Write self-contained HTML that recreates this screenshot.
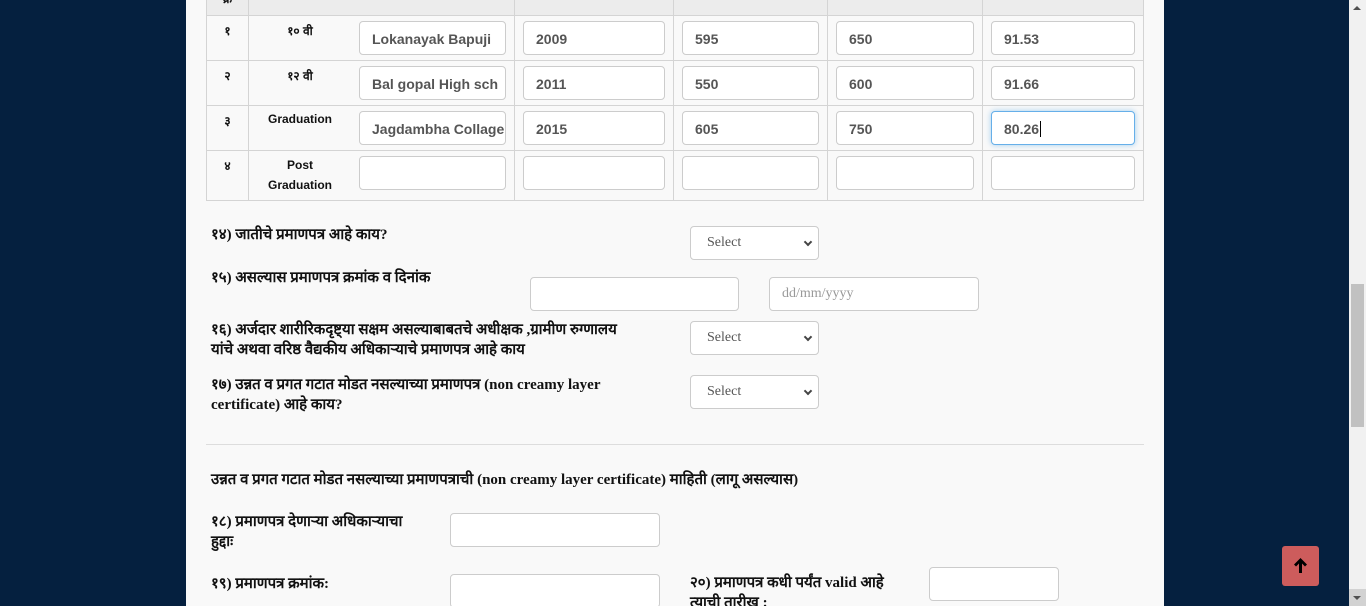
<!DOCTYPE html>
<html style="overflow:hidden;height:606px"><head><meta charset="utf-8"><style>
*{box-sizing:border-box;margin:0;padding:0}
body{width:1366px;height:606px;overflow:hidden;background:#05203f;position:relative;font-family:"Liberation Serif",serif;color:#111}
.panel{position:absolute;left:186px;top:0;width:978px;height:606px;background:#f9f9f9}
.a{position:absolute}
.hl{position:absolute;background:#d4d4d4;height:1px}
.vl{position:absolute;background:#d4d4d4;width:1px}
.inp{position:absolute;background:#fff;border:1px solid #ccc;border-radius:4px;height:34px;font-family:"Liberation Sans",sans-serif;font-weight:bold;font-size:14px;color:#555;padding:9px 12px;white-space:nowrap;overflow:hidden}
.sel{position:absolute;background:#fff;border:1px solid #ccc;border-radius:4px;height:34px;width:129px;font-size:14px;color:#555;padding:8px 16px}
.sel:after{content:"";position:absolute;right:7px;top:12px;width:4px;height:4px;border-right:2px solid #444;border-bottom:2px solid #444;transform:rotate(45deg)}
.c{font-family:"Liberation Sans",sans-serif;font-size:12px;text-align:center;color:#111;font-weight:bold}
.lb{position:absolute;font-size:15px;font-weight:bold;line-height:20px;color:#111}
</style></head><body>
<div class="panel"></div>
<div class="a" style="left:206px;top:0;width:938px;height:15px;background:#ececec"></div>
<div class="hl" style="left:206px;top:15px;width:938px"></div>
<div class="hl" style="left:206px;top:60px;width:938px"></div>
<div class="hl" style="left:206px;top:105px;width:938px"></div>
<div class="hl" style="left:206px;top:150px;width:938px"></div>
<div class="hl" style="left:206px;top:200px;width:938px"></div>
<div class="vl" style="left:206px;top:0;height:201px"></div>
<div class="vl" style="left:248px;top:0;height:201px"></div>
<div class="vl" style="left:514px;top:0;height:201px"></div>
<div class="vl" style="left:673px;top:0;height:201px"></div>
<div class="vl" style="left:827px;top:0;height:201px"></div>
<div class="vl" style="left:982px;top:0;height:201px"></div>
<div class="vl" style="left:1143px;top:0;height:201px"></div>
<div class="a c" style="left:207px;top:-10px;width:41px">क्र</div>
<div class="a c" style="left:207px;top:22px;width:41px">१</div>
<div class="a c" style="left:207px;top:67px;width:41px">२</div>
<div class="a c" style="left:207px;top:112px;width:41px">३</div>
<div class="a c" style="left:207px;top:157px;width:41px">४</div>
<div class="a c" style="left:249px;top:22px;width:102px">१० वी</div>
<div class="a c" style="left:249px;top:67px;width:102px">१२ वी</div>
<div class="a c" style="left:249px;top:112px;width:102px">Graduation</div>
<div class="a c" style="left:249px;top:155px;width:102px;line-height:20px">Post<br>Graduation</div>

<div class="inp" style="left:359px;top:21px;width:147px">Lokanayak Bapuji</div>
<div class="inp" style="left:523px;top:21px;width:142px">2009</div>
<div class="inp" style="left:682px;top:21px;width:137px">595</div>
<div class="inp" style="left:836px;top:21px;width:138px">650</div>
<div class="inp" style="left:991px;top:21px;width:144px">91.53</div>

<div class="inp" style="left:359px;top:66px;width:147px">Bal gopal High sch</div>
<div class="inp" style="left:523px;top:66px;width:142px">2011</div>
<div class="inp" style="left:682px;top:66px;width:137px">550</div>
<div class="inp" style="left:836px;top:66px;width:138px">600</div>
<div class="inp" style="left:991px;top:66px;width:144px">91.66</div>

<div class="inp" style="left:359px;top:111px;width:147px">Jagdambha Collage</div>
<div class="inp" style="left:523px;top:111px;width:142px">2015</div>
<div class="inp" style="left:682px;top:111px;width:137px">605</div>
<div class="inp" style="left:836px;top:111px;width:138px">750</div>
<div class="inp" style="left:991px;top:111px;width:144px;border-color:#66afe9;box-shadow:0 0 6px rgba(102,175,233,.6)">80.26<span style="border-left:1px solid #000;margin-left:1px"></span></div>

<div class="inp" style="left:359px;top:156px;width:147px"></div>
<div class="inp" style="left:523px;top:156px;width:142px"></div>
<div class="inp" style="left:682px;top:156px;width:137px"></div>
<div class="inp" style="left:836px;top:156px;width:138px"></div>
<div class="inp" style="left:991px;top:156px;width:144px"></div>

<div class="lb" style="left:211px;top:225px">१४) जातीचे प्रमाणपत्र आहे काय?</div>
<div class="sel" style="left:690px;top:226px">Select</div>
<div class="lb" style="left:211px;top:268px">१५) असल्यास प्रमाणपत्र क्रमांक व दिनांक</div>
<div class="inp" style="left:530px;top:277px;width:209px"></div>
<div class="inp" style="left:769px;top:277px;width:210px;font-family:'Liberation Serif',serif;font-weight:normal;color:#999;padding:8px 12px">dd/mm/yyyy</div>
<div class="lb" style="left:211px;top:320px;width:425px">१६) अर्जदार शारीरिकदृष्ट्या सक्षम असल्याबाबतचे अधीक्षक ,ग्रामीण रुग्णालय यांचे अथवा वरिष्ठ वैद्यकीय अधिकाऱ्याचे प्रमाणपत्र आहे काय</div>
<div class="sel" style="left:690px;top:321px">Select</div>
<div class="lb" style="left:211px;top:375px;width:420px">१७) उन्नत व प्रगत गटात मोडत नसल्याच्या प्रमाणपत्र (non creamy layer certificate) आहे काय?</div>
<div class="sel" style="left:690px;top:375px">Select</div>

<div class="hl" style="left:206px;top:444px;width:938px;background:#ddd"></div>
<div class="lb" style="left:211px;top:470px;white-space:nowrap">उन्नत व प्रगत गटात मोडत नसल्याच्या प्रमाणपत्राची (non creamy layer certificate) माहिती (लागू असल्यास)</div>
<div class="lb" style="left:211px;top:512px;width:215px">१८) प्रमाणपत्र देणाऱ्या अधिकाऱ्याचा हुद्दाः</div>
<div class="inp" style="left:450px;top:513px;width:210px"></div>
<div class="lb" style="left:211px;top:574px">१९) प्रमाणपत्र क्रमांक:</div>
<div class="inp" style="left:450px;top:574px;width:210px"></div>
<div class="lb" style="left:690px;top:573px;width:215px">२०) प्रमाणपत्र कधी पर्यंत valid आहे त्याची तारीख :</div>
<div class="inp" style="left:929px;top:567px;width:130px"></div>

<div class="a" style="left:1282px;top:546px;width:37px;height:40px;background:#cd5c5c;border-radius:3px">
<svg width="37" height="40" viewBox="0 0 37 40"><path d="M18.5 12 L12 18.5 L14 20.5 L17 17.5 V27 H20 V17.5 L23 20.5 L25 18.5 Z" fill="#000"/></svg>
</div>
<div class="a" style="left:1349px;top:0;width:17px;height:606px;background:#f1f1f1"></div>
<div class="a" style="left:1351px;top:284px;width:13px;height:143px;background:#c1c1c1"></div>
<div class="a" style="left:1353px;top:6px;width:0;height:0;border-left:4px solid transparent;border-right:4px solid transparent;border-bottom:4px solid #505050"></div>
<div class="a" style="left:1349px;top:589px;width:17px;height:17px;background:#d2d2d2"></div>
<div class="a" style="left:1353px;top:596px;width:0;height:0;border-left:4px solid transparent;border-right:4px solid transparent;border-top:4px solid #505050"></div>
</body></html>
